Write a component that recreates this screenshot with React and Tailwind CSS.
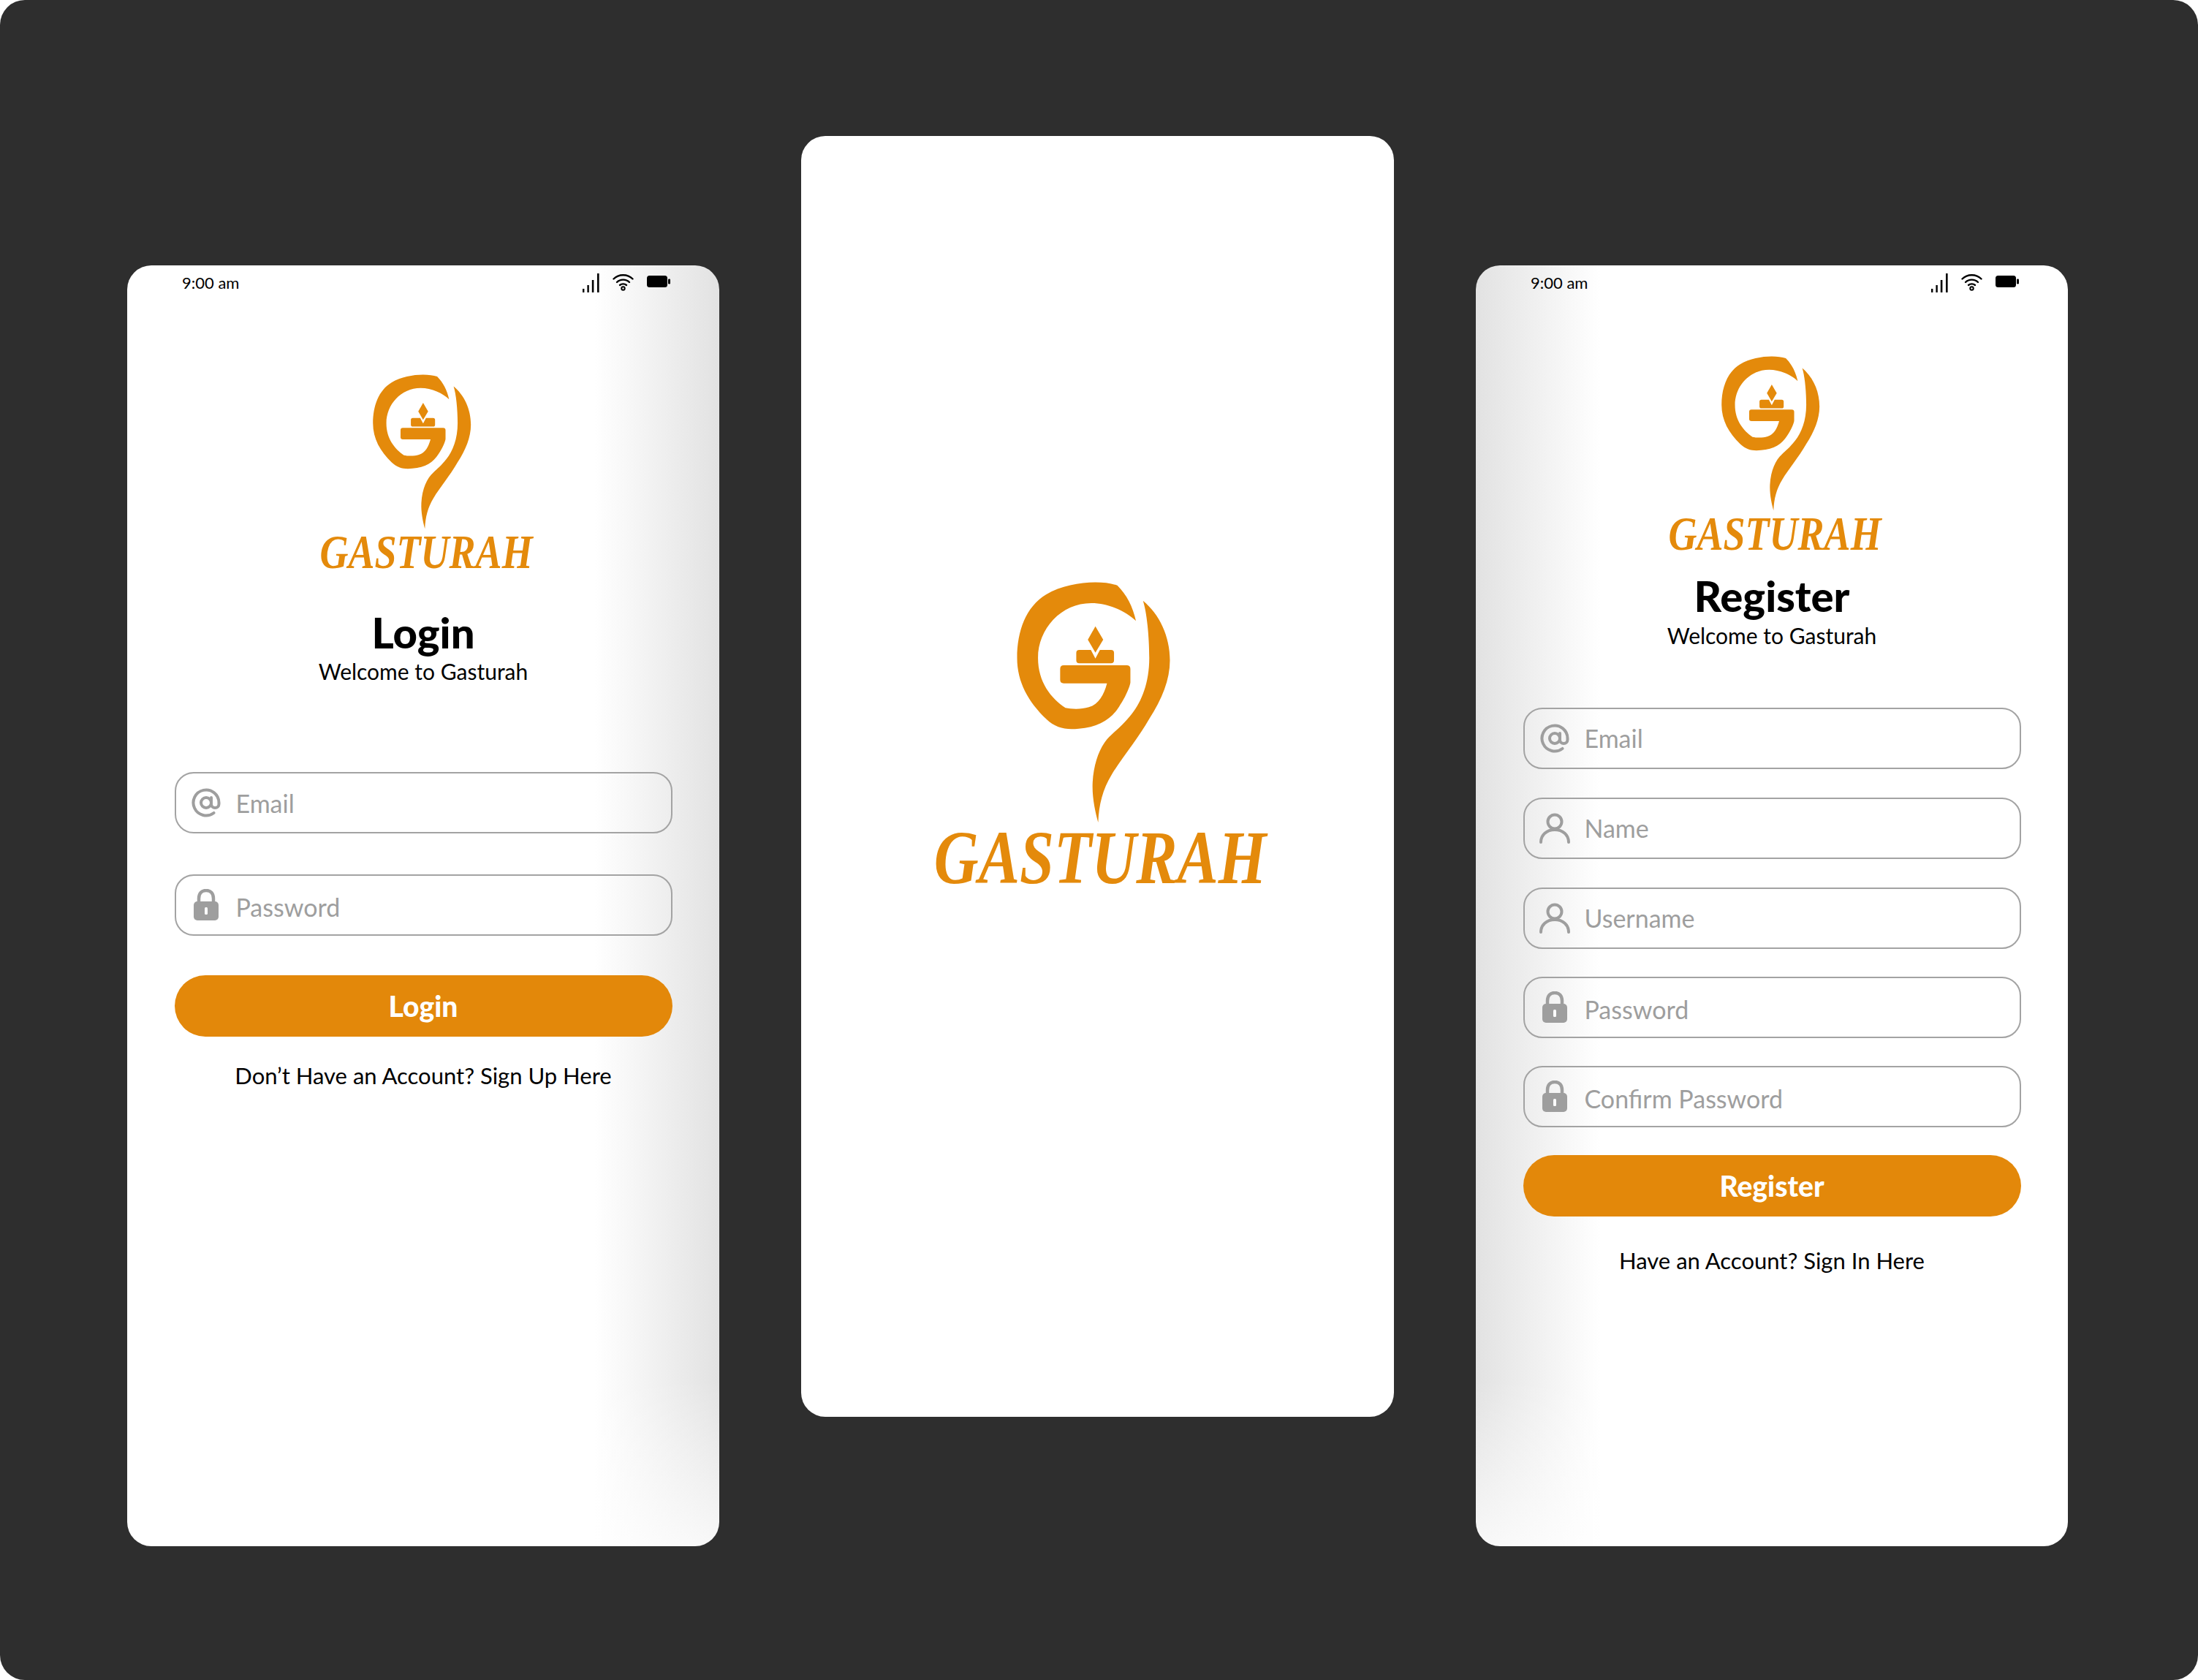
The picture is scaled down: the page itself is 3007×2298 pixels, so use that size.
import React from "react";
import { AtSign } from "lucide-react";

const ORANGE = "#e48a0b";

function Logo({ w, h }) {
  return (
    <svg width={w} height={h} viewBox="0 0 1568 1440" preserveAspectRatio="none" fill={ORANGE} className="block shrink-0 overflow-visible">
      <path d="M893 122C830 100 700 105 610 160C530 210 495 310 495 420C495 520 540 600 610 670C650 710 690 715 740 710C820 705 870 670 900 620C930 575 945 530 945 520L945 465Q945 450 930 450L680 450Q666 450 666 465L666 510Q666 524 680 524L852 524C840 570 820 610 780 622C750 632 710 630 687 625C630 585 578 520 578 420C578 300 670 195 790 195C860 195 930 230 967 268C955 210 930 160 893 122Z" />
      <path d="M995 185C1010 230 1020 330 1020 420C1020 520 990 600 950 650C920 690 890 715 870 735C830 770 800 840 795 930C792 990 805 1050 817 1095C820 1020 835 960 870 900C910 830 970 760 1020 670C1070 590 1102 510 1102 430C1102 330 1060 240 995 185Z" />
      <path d="M806 290L837 345L806 398L776 345Z" />
      <path d="M742 387L788 387L806 422L824 387L868 387Q880 387 880 399L880 430Q880 442 868 442L742 442Q730 442 730 430L730 399Q730 387 742 387Z" />
      <text x="165" y="1345" textLength="1320" lengthAdjust="spacingAndGlyphs" fontFamily="'Liberation Serif', serif" fontStyle="italic" fontWeight="700" fontSize="310">GASTURAH</text>
    </svg>
  );
}

function StatusBar() {
  return (
    <div className="flex h-[51px] w-full shrink-0 items-start justify-between pl-[75px] pr-[67px] pt-[11px]">
      <span className="text-[22px] leading-[26px] text-black">9:00 am</span>
      <div className="flex items-start gap-[18px]">
        <svg width="23" height="26" viewBox="0 0 23 26" fill="#000">
          <rect x="0" y="21" width="2.4" height="5" />
          <rect x="6.4" y="16" width="2.4" height="10" />
          <rect x="12.8" y="9" width="2.6" height="17" />
          <rect x="20" y="0" width="2.6" height="26" />
        </svg>
        <svg width="29" height="24" viewBox="0 0 29 24" fill="none" stroke="#000" strokeWidth="2.4" strokeLinecap="round">
          <path d="M1.5 7.5C8.5 .5 20.5 .5 27.5 7.5" />
          <path d="M6 12C10.5 7.5 18.5 7.5 23 12" />
          <path d="M10 16C12.5 13.8 16.5 13.8 19 16" />
          <circle cx="14.5" cy="20.5" r="2.2" strokeWidth="2" />
        </svg>
        <svg width="32" height="17" viewBox="0 0 32 17" fill="#000" className="mt-[3px]">
          <rect x="0" y="0" width="28" height="16" rx="3.5" />
          <rect x="29" y="4.5" width="3" height="7" rx="1.2" />
        </svg>
      </div>
    </div>
  );
}

function UserIcon() {
  return (
    <svg width="42" height="42" viewBox="0 0 42 42" fill="none" stroke="#9e9e9e" strokeWidth="4" strokeLinecap="round">
      <circle cx="21" cy="12" r="9.5" />
      <path d="M2 40C2 30 10 23 21 23C32 23 40 30 40 40" />
    </svg>
  );
}

function LockIcon() {
  return (
    <svg width="42" height="44" viewBox="0 0 42 44">
      <path d="M11 20V13C11 6 15 2 21 2C27 2 31 6 31 13V20" fill="none" stroke="#9e9e9e" strokeWidth="4.5" />
      <rect x="4" y="17" width="34" height="26" rx="5" fill="#9e9e9e" />
      <rect x="19" y="25" width="4" height="10" rx="1.5" fill="#fff" />
    </svg>
  );
}

function Field({ icon, label, className, labelClass = "" }) {
  return (
    <div className={"flex h-[84px] w-[681px] shrink-0 items-center rounded-[26px] border-2 border-[#a3a3a3] pl-[20px] " + className}>
      <span className="flex w-[42px] shrink-0 items-center justify-center">
        {icon === "at" && <AtSign size={50} strokeWidth={2.3} color="#9e9e9e" />}
        {icon === "user" && <UserIcon />}
        {icon === "lock" && <LockIcon />}
      </span>
      <span className={"ml-[20px] text-[34px] leading-[44px] text-[#9e9e9e] " + labelClass}>{label}</span>
    </div>
  );
}

function LoginCard() {
  return (
    <div className="mt-[177px] flex h-[1752px] w-[810px] shrink-0 flex-col items-center rounded-[33px] bg-[linear-gradient(to_top,rgba(255,255,255,0.75),transparent_13%),linear-gradient(to_right,#ffffff_79%,#e2e2e2)]">
      <StatusBar />
      <div className="ml-[227px] mt-[75px] self-start"><Logo w={346} h={308} /></div>
      <h1 className="mt-[38px] text-[58px] font-black leading-[60px] text-black">Login</h1>
      <p className="mt-[3px] text-[30px] leading-[40px] text-black">Welcome to Gasturah</p>
      <Field icon="at" label="Email" className="mt-[118px]" labelClass="pt-[2px]" />
      <Field icon="lock" label="Password" className="mt-[56px]" labelClass="pt-[6px]" />
      <button className="mt-[54px] h-[84px] w-[681px] shrink-0 rounded-full bg-[#e3880a] text-[39px] font-black text-white">Login</button>
      <p className="mt-[33px] text-[31px] leading-[40px] text-black">Don’t Have an Account? Sign Up Here</p>
    </div>
  );
}

function SplashCard() {
  return (
    <div className="h-[1752px] w-[811px] shrink-0 rounded-[33px] bg-white pl-[125px] pt-[574px]">
      <Logo w={540} h={480} />
    </div>
  );
}

function RegisterCard() {
  return (
    <div className="mt-[177px] flex h-[1752px] w-[810px] shrink-0 flex-col items-center rounded-[33px] bg-[linear-gradient(to_top,rgba(255,255,255,0.75),transparent_13%),linear-gradient(to_left,#ffffff_79%,#e2e2e2)]">
      <StatusBar />
      <div className="ml-[227px] mt-[50px] self-start"><Logo w={346} h={308} /></div>
      <h1 className="mt-[13px] text-[58px] font-black leading-[60px] text-black">Register</h1>
      <p className="mt-[4px] text-[30px] leading-[40px] text-black">Welcome to Gasturah</p>
      <Field icon="at" label="Email" className="mt-[79px]" />
      <Field icon="user" label="Name" className="mt-[39px]" />
      <Field icon="user" label="Username" className="mt-[39px]" />
      <Field icon="lock" label="Password" className="mt-[38px]" labelClass="pt-[6px]" />
      <Field icon="lock" label="Confirm Password" className="mt-[38px]" labelClass="pt-[6px]" />
      <button className="mt-[38px] h-[84px] w-[681px] shrink-0 rounded-full bg-[#e3880a] text-[39px] font-black text-white">Register</button>
      <p className="mt-[40px] text-[31px] leading-[40px] text-black">Have an Account? Sign In Here</p>
    </div>
  );
}

export default function App() {
  return (
    <div className="flex h-[2298px] w-[3007px] items-start justify-between overflow-hidden rounded-[34px] bg-[#2e2e2e] pl-[174px] pr-[178px] pt-[186px] font-['Lato',sans-serif]">
      <LoginCard />
      <SplashCard />
      <RegisterCard />
    </div>
  );
}
